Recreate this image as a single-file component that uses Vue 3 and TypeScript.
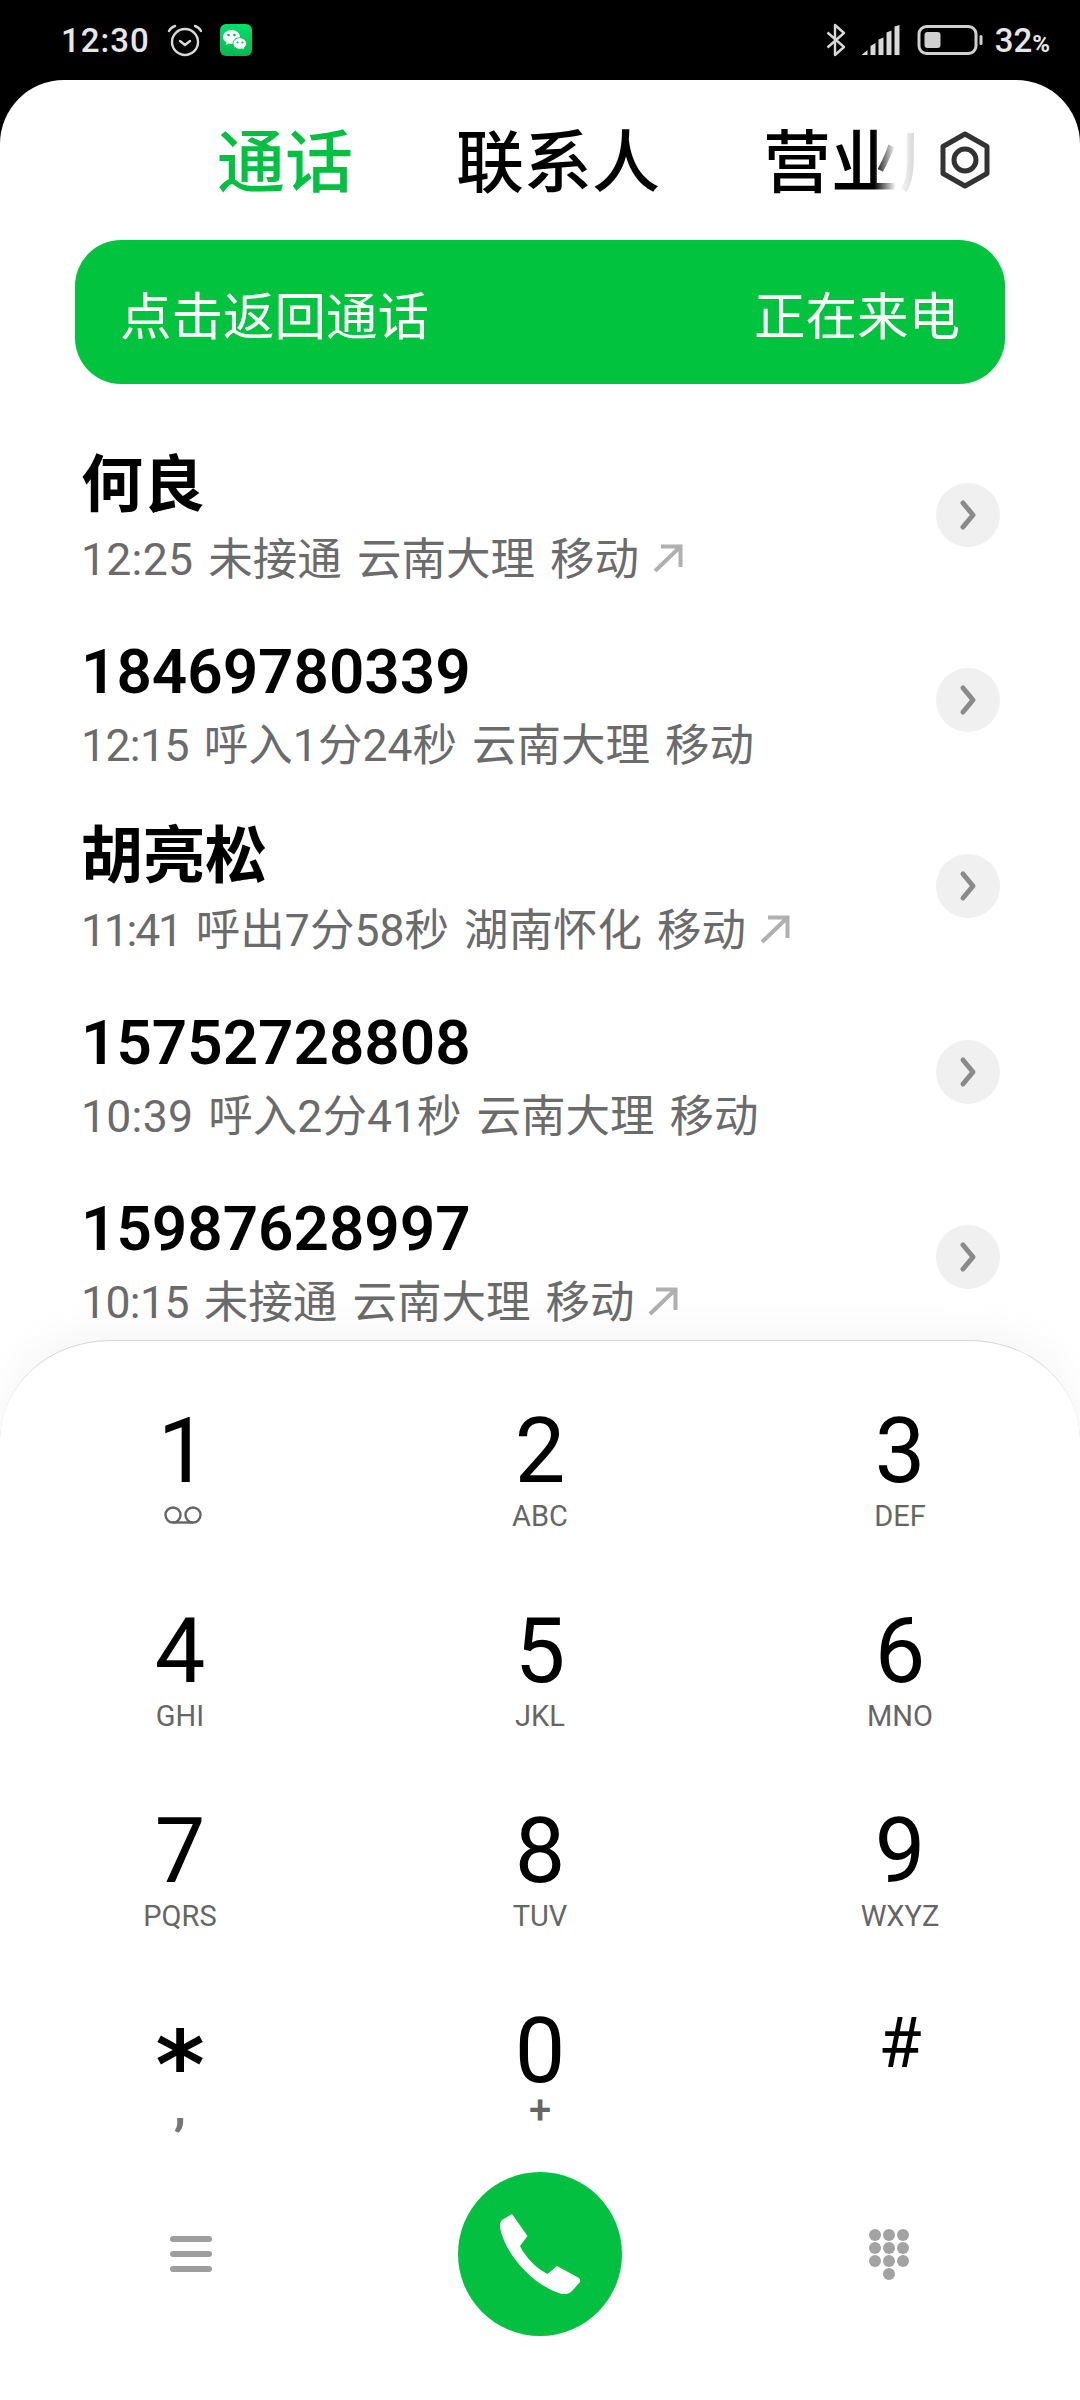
<script setup lang="ts">
interface Call { name: string; time: string; rest: string; outgoing: boolean }
interface Key { digit: string; sub: string; kind?: string }

const calls: Call[] = [
  { name: '何良', time: '12:25', rest: '未接通 云南大理 移动', outgoing: true },
  { name: '18469780339', time: '12:15', rest: '呼入1分24秒 云南大理 移动', outgoing: false },
  { name: '胡亮松', time: '11:41', rest: '呼出7分58秒 湖南怀化 移动', outgoing: true },
  { name: '15752728808', time: '10:39', rest: '呼入2分41秒 云南大理 移动', outgoing: false },
  { name: '15987628997', time: '10:15', rest: '未接通 云南大理 移动', outgoing: true }
]

// The reference font sets "1" narrower than the other digits.
const timeSpacing = (time: string): string => {
  const ones = time.split('1').length - 1
  return `${[0.3, 0.3, -0.6, -2.2][ones]}px`
}

const keys: Key[] = [
  { digit: '1', sub: '' , kind: 'voicemail' },
  { digit: '2', sub: 'ABC' },
  { digit: '3', sub: 'DEF' },
  { digit: '4', sub: 'GHI' },
  { digit: '5', sub: 'JKL' },
  { digit: '6', sub: 'MNO' },
  { digit: '7', sub: 'PQRS' },
  { digit: '8', sub: 'TUV' },
  { digit: '9', sub: 'WXYZ' },
  { digit: '*', sub: ',', kind: 'star' },
  { digit: '0', sub: '+', kind: 'zero' },
  { digit: '#', sub: '', kind: 'hash' }
]

const dots: [number, number][] = [
  [6, 6], [20, 6], [34, 6],
  [6, 19], [20, 19], [34, 19],
  [6, 32], [20, 32], [34, 32],
  [20, 45]
]
</script>

<template>
  <div class="phone">
    <header class="status">
      <div class="status-left">
        <span class="clock">12:30</span>
        <svg class="alarm" width="36" height="36" viewBox="0 0 36 36" fill="none" stroke="#d8d8d8" stroke-width="2.4" stroke-linecap="round" stroke-linejoin="round">
          <circle cx="18" cy="20" r="13" />
          <path d="M13 19l5 4 5-4" />
          <path d="M2 9c1-2 3-4 6-5M34 9c-1-2-3-4-6-5" />
        </svg>
        <svg class="wechat" width="32" height="32" viewBox="0 0 32 32">
          <defs>
            <linearGradient id="wg" x1="0" y1="0" x2="0" y2="1">
              <stop offset="0" stop-color="#06df6c" />
              <stop offset="1" stop-color="#07b850" />
            </linearGradient>
          </defs>
          <rect width="32" height="32" rx="6" fill="url(#wg)" />
          <path d="M3 13c0-4 4-7 8.500-7s8.500 3 8.500 7-4 7-8.500 7c-1 0-2-.2-3-.4L6 21l.5-2.700C4.300 17 3 15 3 13z" fill="#fff" />
          <path d="M13 19.500c0-3.300 3.200-5.800 6.700-5.800s6.800 2.500 6.800 5.800c0 1.800-1 3.300-2.400 4.400l.5 2.300-2.300-1.300c-.8.200-1.700.4-2.600.4-3.500 0-6.700-2.500-6.700-5.800z" fill="#fff" stroke="#07c45c" stroke-width="1" />
          <circle cx="8.500" cy="11" r="1.300" fill="#07b850" />
          <circle cx="14.500" cy="11" r="1.300" fill="#07b850" />
          <circle cx="17.500" cy="18.500" r="1.100" fill="#07b850" />
          <circle cx="22.500" cy="18.500" r="1.100" fill="#07b850" />
        </svg>
      </div>
      <div class="status-right">
        <svg width="20" height="34" viewBox="0 0 20 34" fill="none" stroke="#d8d8d8" stroke-width="2.400" stroke-linejoin="round">
          <path d="M1.500 9.500L18 24 9 32V2l9 8L1.500 24.500" />
        </svg>
        <svg class="signal" width="39" height="30" viewBox="0 0 38 30" fill="#d8d8d8">
          <path d="M0 30l6-5v5zM9 21l5-3v12H9zM17 14.500l5-2V30h-5zM25 7.500l5-2V30h-5zM33 1.500l5-1.500v30h-5z" />
        </svg>
        <svg class="battery" width="67" height="30" viewBox="0 0 66 30">
          <rect x="1.500" y="1.500" width="57" height="27" rx="7.500" fill="none" stroke="#d0d0d0" stroke-width="3" />
          <rect x="7" y="7" width="16" height="16" rx="3" fill="#d0d0d0" />
          <rect x="62" y="10" width="3" height="10" rx="1.500" fill="#d0d0d0" />
        </svg>
        <span class="pct">32<small>%</small></span>
      </div>
    </header>

    <main class="sheet">
      <nav class="tabs">
        <div class="tab-strip">
          <span class="tab active">通话</span>
          <span class="tab">联系人</span>
          <span class="tab">营业厅</span>
          <span class="tab-fade"></span>
        </div>
        <svg class="gear" width="52" height="58" viewBox="0 0 52 58" fill="none" stroke="#333" stroke-width="5" stroke-linejoin="round">
          <path d="M26 3l22 12.500v27L26 55 4 42.500v-27z" />
          <circle cx="26" cy="29" r="11" />
        </svg>
      </nav>

      <div class="banner">
        <span>点击返回通话</span>
        <span>正在来电</span>
      </div>

      <ul class="list">
        <li v-for="c in calls" :key="c.name" class="row">
          <div class="info">
            <div class="name">{{ c.name }}</div>
            <div class="detail">
              <span><span class="time" :style="{ letterSpacing: timeSpacing(c.time) }">{{ c.time }}</span> {{ c.rest }}</span>
              <svg v-if="c.outgoing" class="arrow" width="30" height="30" viewBox="0 0 30 30" fill="none" stroke="#b0b0b0" stroke-width="4">
                <path d="M2 28L27 4M8 3.500h19.500V24" />
              </svg>
            </div>
          </div>
          <span class="more">
            <svg width="20" height="32" viewBox="0 0 20 32" fill="none" stroke="#8a8a8a" stroke-width="5" stroke-linecap="round" stroke-linejoin="round">
              <path d="M5 4l10 12L5 28" />
            </svg>
          </span>
        </li>
      </ul>

      <section class="pad">
        <div class="keys">
          <div v-for="k in keys" :key="k.digit" class="key" :class="k.kind">
            <span class="digit">{{ k.digit }}</span>
            <svg v-if="k.kind === 'voicemail'" class="vm" width="40" height="20" viewBox="0 0 40 20" fill="none" stroke="#666" stroke-width="2.400">
              <circle cx="10" cy="9" r="7.500" />
              <circle cx="30" cy="9" r="7.500" />
              <path d="M10 16.500h20" />
            </svg>
            <span v-else class="sub">{{ k.sub }}</span>
          </div>
        </div>
        <div class="actions">
          <svg class="menu" width="42" height="36" viewBox="0 0 42 36" fill="#9e9e9e">
            <rect y="0" width="42" height="6" rx="3" />
            <rect y="15" width="42" height="6" rx="3" />
            <rect y="30" width="42" height="6" rx="3" />
          </svg>
          <button class="call" type="button" aria-label="call">
            <svg width="80" height="80" viewBox="0 0 80 80" fill="#fff">
              <path d="M12 0 L27.500 22 L20 32 C26 44 36 54 47.500 60 L57 52 L79 64 Q81 66 80 68 L72 77 Q68 81 62 80 C34 72 6 42 0 14 Q-1 9 2 6 Z" />
            </svg>
          </button>
          <svg class="dial" width="40" height="51" viewBox="0 0 40 51" fill="#a3a3a3">
            <circle v-for="(d, i) in dots" :key="i" :cx="d[0]" :cy="d[1]" r="6" />
          </svg>
        </div>
      </section>
    </main>
  </div>
</template>

<style>
html, body { margin: 0; padding: 0; background: #000; }
</style>

<style scoped>
.phone {
  width: 1080px;
  height: 2400px;
  background: #000;
  display: flex;
  flex-direction: column;
  overflow: hidden;
  font-family: Roboto, "Noto Sans CJK SC", sans-serif;
}
.status {
  height: 80px;
  flex: none;
  display: flex;
  justify-content: space-between;
  align-items: center;
  padding: 0 30px 0 61px;
  box-sizing: border-box;
  color: #e6e6e6;
}
.status-left, .status-right { display: flex; align-items: center; }
.clock { font-size: 33px; font-weight: 500; letter-spacing: 1px; margin-right: 17px; }
.alarm { margin-right: 17px; }
.status-right .signal { margin-left: 15px; }
.status-right .battery { margin-left: 17px; }
.pct { font-size: 33px; font-weight: 500; margin-left: 11px; }
.pct small { font-size: 24px; font-weight: 700; }
.sheet {
  flex: 1;
  min-height: 0;
  background: #fff;
  border-radius: 64px 64px 0 0;
  display: flex;
  flex-direction: column;
  overflow: hidden;
}
.tabs {
  height: 160px;
  flex: none;
  display: flex;
  align-items: flex-start;
  padding: 39px 0 0 217px;
  box-sizing: border-box;
}
.tab-strip {
  width: 697px;
  height: 90px;
  display: flex;
  gap: 103px;
  overflow: hidden;
  position: relative;
  flex: none;
}
.tab {
  font-size: 68px;
  line-height: 90px;
  font-weight: 500;
  color: #000;
  white-space: nowrap;
  flex: none;
}
.tab.active { color: #04c040; }
.tab-fade {
  position: absolute;
  right: 0;
  top: 0;
  bottom: 0;
  width: 40px;
  background: linear-gradient(to right, rgba(255,255,255,0), #fff 55%, rgba(255,255,255,0.85));
}
.gear { margin: 12px 0 0 25px; flex: none; }
.banner {
  flex: none;
  margin: 0 75px;
  height: 144px;
  border-radius: 46px;
  background: #02c33e;
  color: #fff;
  font-size: 51.500px;
  display: flex;
  align-items: center;
  justify-content: space-between;
  padding: 0 45px;
}
.list {
  flex: 1;
  min-height: 0;
  list-style: none;
  margin: 0;
  padding: 38px 80px 0 81px;
  overflow: hidden;
}
.row {
  height: 185.600px;
  display: flex;
  align-items: center;
  justify-content: space-between;
}
.info { min-width: 0; padding-top: 4px; }
.name {
  font-size: 62px;
  line-height: 87px;
  font-weight: 600;
  color: #000;
}
.detail {
  font-size: 44.500px;
  line-height: 62px;
  word-spacing: 4px;
  color: #6b6b6b;
  display: flex;
  align-items: center;
  gap: 14px;
  white-space: nowrap;
}
.arrow { margin-top: -4px; }
.more {
  width: 64px;
  height: 64px;
  border-radius: 50%;
  background: #f0f0f0;
  display: flex;
  align-items: center;
  justify-content: center;
}
.pad {
  flex: none;
  height: 1060px;
  background: #fff;
  border-radius: 110px 110px 0 0 / 100px 100px 0 0;
  border-top: 1.500px solid #d6d6d6;
  box-sizing: border-box;
  box-shadow: 0 -16px 40px rgba(0,0,0,0.035);
  position: relative;
  display: flex;
  flex-direction: column;
}
.keys {
  display: grid;
  grid-template-columns: repeat(3, 360px);
  grid-auto-rows: 200px;
  padding-top: 61px;
}
.key {
  display: flex;
  flex-direction: column;
  align-items: center;
  color: #000;
}
.digit {
  font-size: 90px;
  line-height: 100px;
  font-weight: 400;
}
.sub {
  font-size: 29px;
  line-height: 30px;
  color: #666;
  margin-top: -1px;
}
.vm { margin-top: 4px; margin-left: 6px; }
.voicemail .digit { margin-left: 6px; }
.star .digit { font-family: "DejaVu Sans", sans-serif; font-weight: 700; font-size: 94px; line-height: 100px; height: 100px; box-sizing: border-box; padding-top: 14px; }
.star .sub { font-size: 50px; font-weight: 700; color: #777; line-height: 30px; margin-top: -10px; }
.zero .sub { font-size: 40px; font-weight: 500; color: #666; margin-top: -6px; }
.hash .digit { font-size: 70px; line-height: 82px; }
.actions {
  display: grid;
  grid-template-columns: repeat(3, 360px);
  justify-items: center;
  align-items: center;
  margin-top: -30px;
}
.call {
  width: 164px;
  height: 164px;
  border-radius: 50%;
  border: 0;
  padding: 0;
  background: #04c040;
  display: flex;
  align-items: center;
  justify-content: center;
}
.menu { margin-left: 22px; }
.dial { margin-right: 22px; }
</style>
